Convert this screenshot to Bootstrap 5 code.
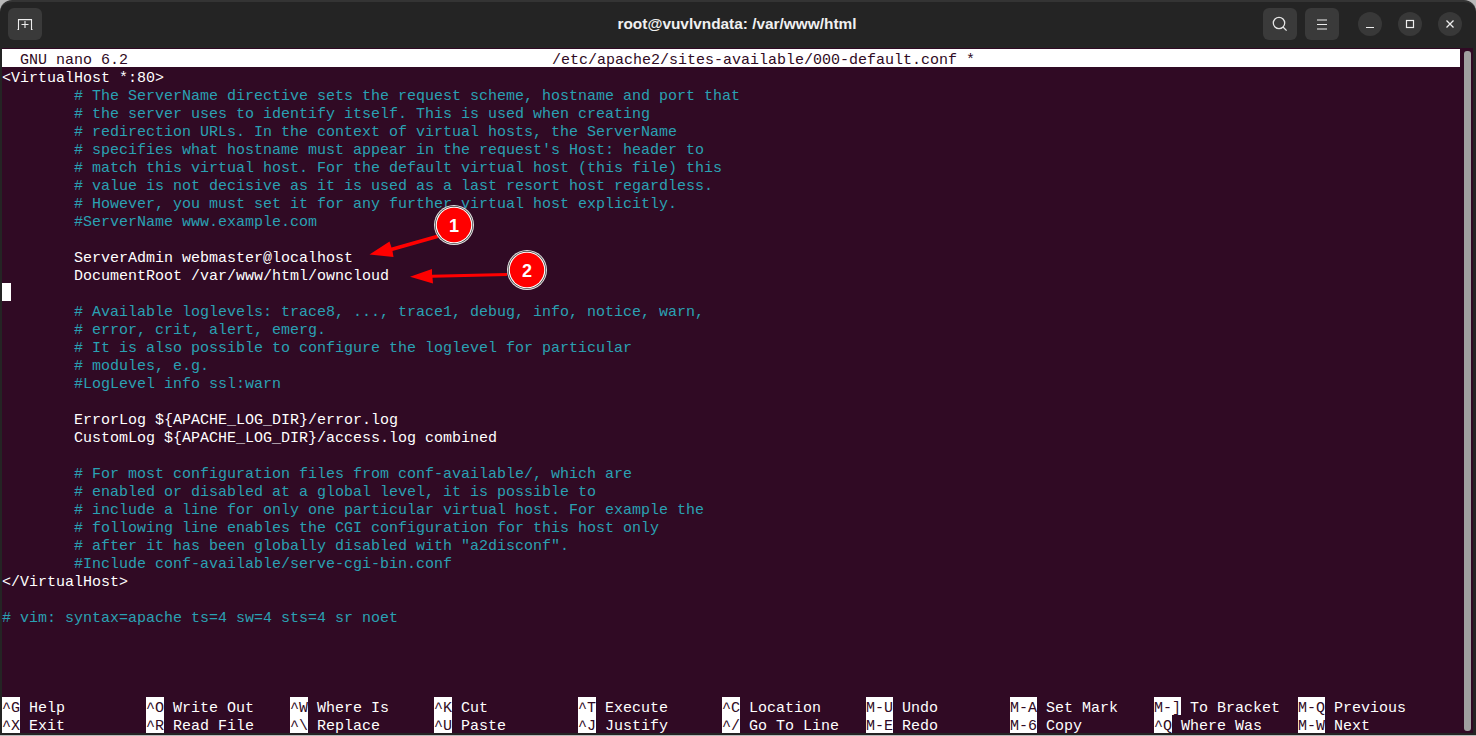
<!DOCTYPE html>
<html lang="en"><head><meta charset="utf-8"><title>root@vuvlvndata: /var/www/html</title>
<link href="https://cdn.jsdelivr.net/npm/bootstrap@5.3.0/dist/css/bootstrap.min.css" rel="stylesheet">
<style>
html,body{height:736px;overflow:hidden;background:#b9b9b9}
.termwin{height:735px;background:#242424;border-radius:12px 12px 0 0;border-top:2px solid #343434;position:relative;overflow:hidden}
.headbar{height:46px;padding:6px 14px 0 8px}
.sidebox{flex:1 1 0}
.hbtn{width:34px;height:32px;background:#3a3a3a;border-radius:6px}
.rbtn{width:24px;height:24px;background:#383838;border-radius:50%}
.wingroup{margin-left:11px}
.wintitle{font:700 15.400px "Liberation Sans",sans-serif;color:#f0f0f0;line-height:32px;margin-left:4px}
.screen{background:#300a24;margin:0 3px 0 2px;height:685px;padding-top:1px;font:15px/23px "Liberation Mono",monospace;color:#fff;position:relative}
.ln,.keycell,.tbar{white-space:pre;height:18px}
.cm{color:#2aa1b3}
.tbar{background:#fff;color:#300a24;width:1458px;display:grid;grid-template-columns:550px 1fr}
.cursor{display:inline-block;width:9px;height:18px;background:#fff;vertical-align:top}
.keys{position:absolute;left:0;top:649px;display:grid;grid-template-columns:repeat(10,144px)}
.kk{display:inline-block;height:18px;vertical-align:top;background:#fff;color:#300a24}
.sbar{position:absolute;right:2px;top:3px;bottom:2px;width:7px;background:#a0a0a0;border-radius:3px}
.notes{position:absolute;left:0;top:-2px;pointer-events:none}
.notes text{font:700 18px "Liberation Sans",sans-serif;fill:#fff;text-anchor:middle}
</style></head><body>
<div class="termwin">
<div class="headbar d-flex align-items-start">
<div class="sidebox d-flex">
<div class="hbtn d-flex align-items-center justify-content-center"><svg width="16" height="11" viewBox="0 0 16 11" fill="none" stroke="#eee" stroke-width="1.100"><path d="M.5 10.500H1.500V.6H14.500V10.500H15.500M4.500 5.500h7M8 2v7"/></svg></div>
</div>
<div class="wintitle">root@vuvlvndata: /var/www/html</div>
<div class="sidebox d-flex align-items-center justify-content-end gap-2">
<div class="hbtn d-flex align-items-center justify-content-center"><svg width="16" height="16" viewBox="0 0 16 16" fill="none" stroke="#e4e4e4" stroke-width="1.300"><circle cx="7" cy="7" r="5.700"/><path d="M11 11l3.600 3.600"/></svg></div>
<div class="hbtn d-flex align-items-center justify-content-center"><svg width="12" height="11" viewBox="0 0 12 11" fill="none" stroke="#eee" stroke-width="1.200"><path d="M1 1h10M1 5.500h10M1 10h10"/></svg></div>
<div class="wingroup d-flex align-items-center gap-3">
<div class="rbtn d-flex align-items-center justify-content-center"><svg width="10" height="10" viewBox="0 0 10 10" fill="none" stroke="#eee" stroke-width="1.200"><path d="M1 8.500h8"/></svg></div>
<div class="rbtn d-flex align-items-center justify-content-center"><svg width="10" height="10" viewBox="0 0 10 10" fill="none" stroke="#eee" stroke-width="1.200"><rect x="1.500" y="1.500" width="7" height="7"/></svg></div>
<div class="rbtn d-flex align-items-center justify-content-center"><svg width="10" height="10" viewBox="0 0 10 10" fill="none" stroke="#eee" stroke-width="1.300"><path d="M1.500 1.500l7 7M8.500 1.500l-7 7"/></svg></div>
</div></div></div>
<div class="screen">
<div class="tbar"><span>  GNU nano 6.2</span><span>/etc/apache2/sites-available/000-default.conf *</span></div>
<div class="ln">&lt;VirtualHost *:80&gt;</div>
<div class="ln cm">        # The ServerName directive sets the request scheme, hostname and port that</div>
<div class="ln cm">        # the server uses to identify itself. This is used when creating</div>
<div class="ln cm">        # redirection URLs. In the context of virtual hosts, the ServerName</div>
<div class="ln cm">        # specifies what hostname must appear in the request's Host: header to</div>
<div class="ln cm">        # match this virtual host. For the default virtual host (this file) this</div>
<div class="ln cm">        # value is not decisive as it is used as a last resort host regardless.</div>
<div class="ln cm">        # However, you must set it for any further virtual host explicitly.</div>
<div class="ln cm">        #ServerName www.example.com</div>
<div class="ln"></div>
<div class="ln">        ServerAdmin webmaster@localhost</div>
<div class="ln">        DocumentRoot /var/www/html/owncloud</div>
<div class="ln"><span class="cursor"></span></div>
<div class="ln cm">        # Available loglevels: trace8, ..., trace1, debug, info, notice, warn,</div>
<div class="ln cm">        # error, crit, alert, emerg.</div>
<div class="ln cm">        # It is also possible to configure the loglevel for particular</div>
<div class="ln cm">        # modules, e.g.</div>
<div class="ln cm">        #LogLevel info ssl:warn</div>
<div class="ln"></div>
<div class="ln">        ErrorLog ${APACHE_LOG_DIR}/error.log</div>
<div class="ln">        CustomLog ${APACHE_LOG_DIR}/access.log combined</div>
<div class="ln"></div>
<div class="ln cm">        # For most configuration files from conf-available/, which are</div>
<div class="ln cm">        # enabled or disabled at a global level, it is possible to</div>
<div class="ln cm">        # include a line for only one particular virtual host. For example the</div>
<div class="ln cm">        # following line enables the CGI configuration for this host only</div>
<div class="ln cm">        # after it has been globally disabled with "a2disconf".</div>
<div class="ln cm">        #Include conf-available/serve-cgi-bin.conf</div>
<div class="ln">&lt;/VirtualHost&gt;</div>
<div class="ln"></div>
<div class="ln cm"># vim: syntax=apache ts=4 sw=4 sts=4 sr noet</div>
<div class="keys">
<div class="keycell"><span class="kk">^G</span> Help</div><div class="keycell"><span class="kk">^O</span> Write Out</div><div class="keycell"><span class="kk">^W</span> Where Is</div><div class="keycell"><span class="kk">^K</span> Cut</div><div class="keycell"><span class="kk">^T</span> Execute</div><div class="keycell"><span class="kk">^C</span> Location</div><div class="keycell"><span class="kk">M-U</span> Undo</div><div class="keycell"><span class="kk">M-A</span> Set Mark</div><div class="keycell"><span class="kk">M-]</span> To Bracket</div><div class="keycell"><span class="kk">M-Q</span> Previous</div>
<div class="keycell"><span class="kk">^X</span> Exit</div><div class="keycell"><span class="kk">^R</span> Read File</div><div class="keycell"><span class="kk">^\</span> Replace</div><div class="keycell"><span class="kk">^U</span> Paste</div><div class="keycell"><span class="kk">^J</span> Justify</div><div class="keycell"><span class="kk">^/</span> Go To Line</div><div class="keycell"><span class="kk">M-E</span> Redo</div><div class="keycell"><span class="kk">M-6</span> Copy</div><div class="keycell"><span class="kk">^Q</span> Where Was</div><div class="keycell"><span class="kk">M-W</span> Next</div>
</div>
<div class="sbar"></div>
</div>
<svg class="notes" width="1476" height="736" viewBox="0 0 1476 736">
<path d="M369.500 254.500L389.500 241.500L391.500 247.500L437.500 234.500L438.500 238L392.500 251L393.500 257Z" fill="#f00"/>
<path d="M410 276.700L432 269L432 274.800L507 273L507 276L432.500 277.800L433 283.500Z" fill="#f00"/>
<circle cx="454" cy="225" r="20" fill="#ddd"/><circle cx="454" cy="225" r="19" fill="#3a3a3a"/><circle cx="454" cy="225" r="18.300" fill="#fff"/><circle cx="454" cy="225" r="17.200" fill="#f00"/><text x="454" y="231.500">1</text>
<circle cx="527" cy="270" r="20" fill="#ddd"/><circle cx="527" cy="270" r="19" fill="#3a3a3a"/><circle cx="527" cy="270" r="18.300" fill="#fff"/><circle cx="527" cy="270" r="17.200" fill="#f00"/><text x="527" y="276.500">2</text>
</svg>
</div>
</body></html>
